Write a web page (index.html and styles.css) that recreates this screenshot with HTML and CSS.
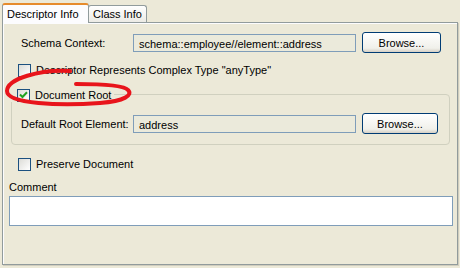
FILE: index.html
```html
<!DOCTYPE html>
<html lang="en">
<head>
    <meta charset="UTF-8">
    <title>Descriptor Info</title>
    <link rel="stylesheet" href="styles.css">
</head>
<body>

<div class="tabs">
    <div class="tab active">Descriptor Info</div>
    <div class="tab">Class Info</div>
</div>

<div class="panel">
    <!-- Schema context -->
    <div class="field-row first">
        <span class="label">Schema Context:</span>
        <div class="text-field">schema::employee//element::address</div>
        <button type="button" class="browse-btn">Browse...</button>
    </div>

    <label class="check">
        <span class="box"></span>
        Descriptor Represents Complex Type "anyType"
    </label>

    <!-- Document root group -->
    <div class="group">
        <label class="check legend">
            <span class="box checked">
                <svg width="9" height="8" viewBox="0 0 9 8"><path d="M1 3.5 L3.5 6 L8 1.2" fill="none" stroke="#21a121" stroke-width="2"/></svg>
            </span>
            Document Root
        </label>
        <div class="field-row">
            <span class="label">Default Root Element:</span>
            <div class="text-field">address</div>
            <button type="button" class="browse-btn">Browse...</button>
        </div>
    </div>

    <label class="check">
        <span class="box"></span>
        Preserve Document
    </label>

    <div class="comment-label">Comment</div>
    <div class="comment-box"></div>
</div>

<!-- red marker drawn over the Document Root checkbox -->
<svg class="marker" width="140" height="55" viewBox="0 0 140 55">
    <path d="M70 11 C40 9 7 19 7 31 C7 44 60 46 100 43 C125 41 133 35 128 30 C124 25 100 24 76 24"
          fill="none" stroke="#e8141b" stroke-width="4" stroke-linecap="round"/>
</svg>

</body>
</html>
```

FILE: styles.css
```css
body {
    margin: 0;
    background-color: #ece9d8;
    font-family: 'Liberation Sans', Arial, sans-serif;
    font-size: 11px;
    color: #000;
    position: relative;
    width: 460px;
    height: 268px;
    overflow: hidden;
}

.tabs {
    display: flex;
    align-items: flex-end;
    padding: 2px 0 0 2px;
    height: 20px;
}

.tab {
    height: 16px;
    line-height: 16px;
    padding: 0 4px;
    border: 1px solid #919b9c;
    border-bottom: none;
    border-radius: 3px 3px 0 0;
    background: linear-gradient(#ffffff, #ecebe5);
    margin-left: -1px;
}

.tab.active {
    height: 18px;
    line-height: 18px;
    width: 77px;
    margin-left: 0;
    margin-bottom: -1px;
    border-top: 2px solid #e68b2c;
    background: #fcfcfe;
    position: relative;
    z-index: 1;
}

.panel {
    margin: 0 2px;
    height: 241px;
    border: 1px solid #919b9c;
    box-shadow: inset 1px 1px 0 #fcfcfe, 1px 1px 0 #d0cdbd;
    padding: 0 6px;
}

.field-row {
    display: flex;
    align-items: center;
    height: 21px;
}

.field-row.first {
    margin: 9px 0 0 12px;
}

.label {
    flex: 0 0 112px;
}

.text-field {
    width: 223px;
    height: 18px;
    line-height: 18px;
    border: 1px solid #7f9db9;
    background: #ebeadb;
    padding-left: 5px;
    box-sizing: border-box;
}

.browse-btn {
    margin-left: 6px;
    width: 79px;
    height: 21px;
    border: 1px solid #003c74;
    border-radius: 3px;
    background: linear-gradient(#ffffff, #f0f0ea 80%, #d6d0c5);
    font-family: inherit;
    font-size: 11px;
    padding: 0;
}

.check {
    display: flex;
    align-items: center;
    height: 14px;
    margin-left: 9px;
}

.panel > .check:first-of-type {
    margin-top: 10px;
}

.box {
    width: 11px;
    height: 11px;
    border: 1px solid #1c5180;
    background: linear-gradient(135deg, #dcdcd7, #ffffff);
    margin-right: 5px;
    display: flex;
    align-items: center;
    justify-content: center;
}

.group {
    margin: 17px 0 0 2px;
    width: 437px;
    height: 49px;
    border: 1px solid #d0d0bf;
    border-radius: 4px;
    position: relative;
}

.check.legend {
    position: absolute;
    top: -7px;
    left: -2px;
    margin: 0;
    background: #ece9d8;
    padding: 0 3px 0 7px;
}

.group .field-row {
    margin: 18px 0 0 9px;
}

.group .browse-btn {
    width: 76px;
}

.panel > .check:last-of-type {
    margin-top: 12px;
}

.comment-label {
    margin-top: 10px;
    height: 13px;
    line-height: 13px;
}

.comment-box {
    margin-top: 2px;
    width: 444px;
    height: 30px;
    box-sizing: border-box;
    border: 1px solid #7f9db9;
    background: #fff;
}

.marker {
    position: absolute;
    left: 0;
    top: 60px;
}
```
